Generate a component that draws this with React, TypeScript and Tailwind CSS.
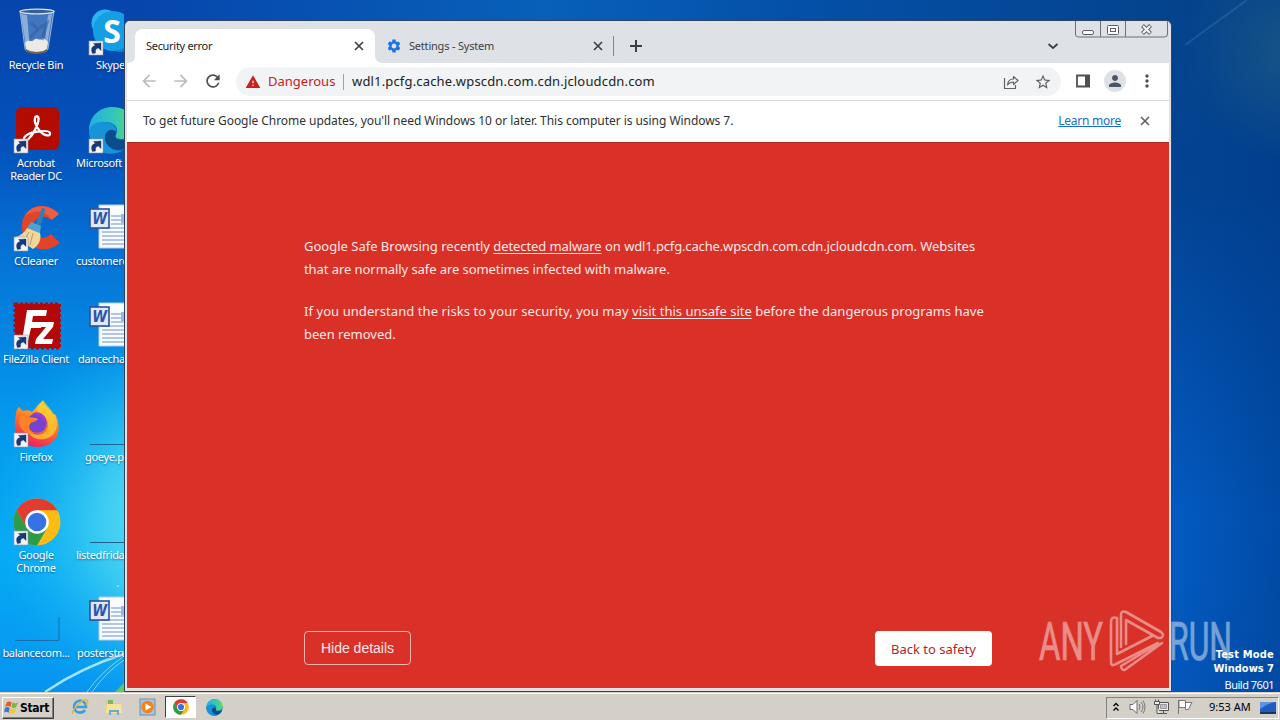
import type { ReactNode } from 'react'
import { clsx } from 'clsx'
import { MdArrowBack, MdArrowForward, MdRefresh, MdStarBorder, MdPerson, MdMoreVert, MdSettings, MdWarning } from 'react-icons/md'

function ShortcutArrow() {
  return (
    <g>
      <rect x="1" y="33" width="14" height="14" fill="#f4f4f4" stroke="#8b98a8" strokeWidth=".6" />
      <path d="M4.500 45.500C2.500 41 4 38 7.500 37.500L5.500 35.500 13 35v7.500L10.500 40C8 40.500 7 42 7.500 45z" fill="#17397c" stroke="#0c2a66" strokeWidth=".4" />
    </g>
  )
}

function Cross({ className }: { className?: string }) {
  return (
    <svg width="14" height="14" viewBox="0 0 14 14" className={clsx('shrink-0', className)}>
      <path d="M3 3l8 8M11 3l-8 8" fill="none" stroke="currentColor" strokeWidth="1.700" />
    </svg>
  )
}

function Art({ children, shortcut = true }: { children?: ReactNode; shortcut?: boolean }) {
  return (
    <svg width="48" height="48" viewBox="0 0 48 48" className="block shrink-0">
      {children}
      {shortcut && <ShortcutArrow />}
    </svg>
  )
}

function RecycleBin() {
  return (
    <Art shortcut={false}>
      <path d="M7 3l5 38c.4 5 22 5 23 0l6-38z" fill="#7fa6cf" fillOpacity=".5" stroke="#b4cbe3" strokeWidth=".8" />
      <path d="M8 6l5 33 4 2-3-34zM39 6l-5 33-3 2 4-34z" fill="#d8e6f4" fillOpacity=".5" />
      <path d="M12 35c3-5 6 0 9-3s5 1 7-1 5 1 7 3l-1 7c-4 4-17 4-21 0z" fill="#eceae4" />
      <path d="M18 15l7 6-8 9M25 21l9-6-5 17" fill="none" stroke="#315f9f" strokeWidth="3" strokeOpacity=".55" />
      <path d="M13 41c4 4 17 4 21 0v2c-4 4-17 4-21 0z" fill="#76644c" />
      <ellipse cx="24" cy="3.5" rx="17" ry="2.3" fill="#365f92" stroke="#d6e0ea" strokeWidth="1.3" />
    </Art>
  )
}

function Skype() {
  return (
    <Art>
      <circle cx="17" cy="15" r="13.500" fill="#2cb4ee" />
      <circle cx="32" cy="31" r="13" fill="#0c7fd0" />
      <circle cx="25" cy="23" r="20" fill="#149fe4" />
      <text x="24" y="35" textAnchor="middle" fontSize="32" fontWeight="700" fill="#fff" fontFamily="Open Sans, sans-serif">S</text>
    </Art>
  )
}

function Acrobat() {
  return (
    <Art>
      <rect x="3" y="1" width="43" height="43" rx="6" fill="#b30b00" />
      <path d="M11 34c-1-4 5-7 11-8 6-1 14-2 15 1 1 4-6 3-10-2-4-4-6-10-5-13 1-3 4-2 3.500 2C25 19 20 29 15.500 33c-2 2-4 3-4.500 1z" fill="none" stroke="#fff" strokeWidth="2.300" />
    </Art>
  )
}

const edgeShapes = (
  <g>
    <circle cx="24" cy="24" r="23" fill="#0c70bd" />
    <path d="M1 25C1 10 12 1 24 1c14 0 23 9 23 19 0 8-6 13-14 13-5 0-6-2-5-4 4-8-3-13-10-13C10 16 3 20 1 25z" fill="url(#edgeGreen)" />
    <path d="M1 25c2-7 9-10 16-9 7 0 12 5 11 10-4-5-12-1-11 7 1 8 9 12 17 12C18 53 1 43 1 25z" fill="#1794d8" />
    <path d="M17 33c-1-8 7-12 11-7-2 6 0 8 6 8s9-1 10 1c-3 5-8 9-14 9-7 0-12-5-13-11z" fill="#0b4c91" />
  </g>
)

function CCleaner() {
  return (
    <Art>
      <path d="M46 10C33-5 9 2 9 22s21 31 38 17l-9-9c-9 8-18 2-18-7s10-14 18-7z" fill="#e0452c" />
      <path d="M46 10C35-1 18 0 12 12c10-7 20-6 27 4z" fill="#f0694a" fillOpacity=".7" />
      <path d="M29 4l3.500 1-6 20-5-2z" fill="#2f7fb5" />
      <path d="M18 18l10 4-1 7-13-5z" fill="#4ca3d4" />
      <path d="M14 24l13 5c2 7-2 13-7 16L2 33c5-1 9-4 12-9z" fill="#f2d699" />
      <path d="M16 28l-5 9M20 29l-3 12" stroke="#c69c50" />
    </Art>
  )
}

function WordDoc() {
  return (
    <Art shortcut={false}>
      <path d="M11 1h34v43H11z" fill="#f8fbff" stroke="#b9c9e4" />
      <path d="M23 12h20M23 16h20M23 20h20M14 24h28M14 28h28M14 32h28M14 36h28M14 40h28" stroke="#6f8fce" />
      <rect x="33" y="10" width="12" height="9" fill="#9bb6e4" />
      <rect x="2" y="5" width="19" height="19" fill="#dfe8f8" stroke="#2c4f9e" strokeWidth="1.600" />
      <text x="11.500" y="20" textAnchor="middle" fontSize="15" fontWeight="700" fontStyle="italic" fill="#2d55ac" fontFamily="DejaVu Sans Condensed, sans-serif">W</text>
    </Art>
  )
}

function FileZilla() {
  return (
    <Art>
      <rect x="2" y="2" width="45" height="44" fill="#b40808" stroke="#b40808" strokeWidth="3" strokeDasharray="3 2" />
      <path d="M14 8h20l-1 6H20l-1 6h10l-1 6H18l-3 13H9z" fill="#fff" />
      <path d="M27 20h14l-1 5-10 12h10l-1 5H22l1-5 10-12h-7z" fill="#fff" />
    </Art>
  )
}

function Firefox() {
  return (
    <Art>
      <path d="M3 14c0-3 1-5 3-7l4 4c3-1 6-1 9 1 3-3 6-8 11-11 1 5 5 7 8 10l1 4 3-1c8 14 3 33-17 33C4 47-1 30 3 14z" fill="url(#foxBody)" />
      <path d="M30 0c-4 4-7 9-6 14 7 0 12 5 11 12-1 10-15 12-20 3 0 12 22 15 28 1 4-13-5-19-13-30z" fill="#ffce32" fillOpacity=".75" />
      <circle cx="24" cy="23" r="9.800" fill="#7542d4" />
      <path d="M6 17c4-2 7-1 10 0 3 1 6 0 9 2-2 3-7 3-8 5-2 4 0 7 4 9-8 3-16-4-15-16z" fill="#ff8226" />
      <path d="M19 14c7-5 16 2 14 11-2-6-5-9-14-11z" fill="#9b3bd5" />
    </Art>
  )
}

const chromeShapes = (
  <g>
    <circle cx="24" cy="24" r="23.500" fill="#fbbc16" />
    <path d="M3.600 12.300A23.500 23.500 0 0 1 44.400 12.300H24L13.800 29.900z" fill="#e03c30" />
    <path d="M3.600 12.300A23.500 23.500 0 0 0 24 47.500L34.200 29.900H13.800z" fill="#2d9b48" />
    <circle cx="24" cy="24" r="11.800" fill="#fff" />
    <circle cx="24" cy="24" r="9.300" fill="#3573e5" />
  </g>
)

function BlankLine() {
  return (
    <Art shortcut={false}>
      <path d="M2 44.500h44" stroke="#17648f" />
    </Art>
  )
}

function BlankCorner() {
  return (
    <Art shortcut={false}>
      <path d="M2 44.500h44V21" fill="none" stroke="#176fae" />
    </Art>
  )
}

const firstColumn = [
  { label: 'Recycle Bin', icon: <RecycleBin /> },
  { label: 'Acrobat\nReader DC', icon: <Acrobat /> },
  { label: 'CCleaner', icon: <CCleaner /> },
  { label: 'FileZilla Client', icon: <FileZilla /> },
  { label: 'Firefox', icon: <Firefox /> },
  { label: 'Google\nChrome', icon: <Art>{chromeShapes}</Art> },
  { label: 'balancecom...', icon: <BlankCorner /> },
]

const secondColumn = [
  { label: 'Skype', icon: <Skype />, indent: 'pl-[22px]' },
  { label: 'Microsoft', icon: <Art>{edgeShapes}</Art>, indent: 'pl-[2px]' },
  { label: 'customerc', icon: <WordDoc />, indent: 'pl-[2px]' },
  { label: 'dancecha', icon: <WordDoc />, indent: 'pl-[4px]' },
  { label: 'goeye.p', icon: <BlankLine />, indent: 'pl-[11px]' },
  { label: 'listedfrida', icon: <BlankLine />, indent: 'pl-[2px]' },
  { label: 'posterstru', icon: <WordDoc />, indent: 'pl-[3px]' },
]

function DesktopIcons() {
  return (
    <div className="flex pt-2 text-[11px] leading-[13px] tracking-[-0.32px] text-white">
      <div className="flex w-[74px] flex-col">
        {firstColumn.map((item) => (
          <div key={item.label} className="flex h-[98px] w-[74px] flex-col items-center">
            {item.icon}
            <div className="mt-[2px] w-[80px] whitespace-pre pr-[2px] text-center [text-shadow:0_1px_2px_rgba(0,20,60,.5)]">{item.label}</div>
          </div>
        ))}
      </div>
      <div className="flex w-[50px] flex-col overflow-hidden">
        {secondColumn.map((item) => (
          <div key={item.label} className="h-[98px] w-[74px]">
            <div className="pl-[14px]">{item.icon}</div>
            <div className={clsx('mt-[2px] whitespace-nowrap [text-shadow:0_1px_2px_rgba(0,20,60,.5)]', item.indent)}>{item.label}</div>
          </div>
        ))}
      </div>
    </div>
  )
}

function Wallpaper() {
  return (
    <svg width="1280" height="692" className="absolute left-0 top-0">
      <defs>
        <linearGradient id="sky" x1="0" y1="0" x2="0" y2="1">
          <stop offset="0" stopColor="#0645ac" />
          <stop offset=".2" stopColor="#0450ba" />
          <stop offset=".38" stopColor="#0575d8" />
          <stop offset=".6" stopColor="#0498ec" />
          <stop offset=".8" stopColor="#05aaf5" />
          <stop offset="1" stopColor="#0794f0" />
        </linearGradient>
        <radialGradient id="glow" gradientUnits="userSpaceOnUse" cx="190" cy="520" r="210">
          <stop offset="0" stopColor="#7ff0f5" />
          <stop offset=".45" stopColor="#48d5f2" stopOpacity=".75" />
          <stop offset="1" stopColor="#05aaf5" stopOpacity="0" />
        </radialGradient>
        <linearGradient id="topStrip">
          <stop offset="0" stopColor="#0645ac" />
          <stop offset=".4" stopColor="#0860b8" />
          <stop offset=".65" stopColor="#0450a8" />
          <stop offset="1" stopColor="#04438d" />
        </linearGradient>
        <linearGradient id="rightStrip" x1="0" y1="0" x2="0" y2="1">
          <stop offset="0" stopColor="#04438d" />
          <stop offset=".28" stopColor="#024493" />
          <stop offset=".5" stopColor="#024fac" />
          <stop offset=".75" stopColor="#025cc3" />
          <stop offset="1" stopColor="#0358bc" />
        </linearGradient>
        <linearGradient id="edgeShade">
          <stop offset="0" stopColor="#003a88" stopOpacity="0" />
          <stop offset="1" stopColor="#003a88" stopOpacity=".5" />
        </linearGradient>
        <radialGradient id="cornerHaze" gradientUnits="userSpaceOnUse" cx="1290" cy="50" r="110">
          <stop offset="0" stopColor="#1f5d85" stopOpacity=".7" />
          <stop offset="1" stopColor="#1f5d85" stopOpacity="0" />
        </radialGradient>
        <linearGradient id="edgeGreen">
          <stop offset="0" stopColor="#22aee4" />
          <stop offset=".6" stopColor="#37c9b3" />
          <stop offset="1" stopColor="#6ddb4d" />
        </linearGradient>
        <linearGradient id="foxBody" x1=".7" y1="0" x2=".3" y2="1">
          <stop offset="0" stopColor="#ffd72e" />
          <stop offset=".45" stopColor="#ff7a22" />
          <stop offset="1" stopColor="#ec1b67" />
        </linearGradient>
      </defs>
      <rect width="1280" height="692" fill="url(#sky)" />
      <rect width="400" height="692" fill="url(#glow)" />
      <rect x="124" width="1046" height="40" fill="url(#topStrip)" />
      <rect x="1168" width="112" height="692" fill="url(#rightStrip)" />
      <rect x="1168" width="112" height="692" fill="url(#edgeShade)" />
      <rect x="1168" width="112" height="200" fill="url(#cornerHaze)" />
      <path d="M1185 45L1247 0" stroke="#5f8fc0" strokeOpacity=".25" strokeWidth="2" />
      <path d="M45 692Q80 668 124 654" fill="none" stroke="#c9f8ff" strokeWidth="2.500" strokeOpacity=".8" />
      <path d="M87 692Q100 673 124 656M92 692Q106 672 124 660" fill="none" stroke="#a8efff" strokeOpacity=".7" />
      <path d="M115 692l9-9v9z" fill="#64c85a" />
      <path d="M117 586h2" stroke="#c2f2ff" />
    </svg>
  )
}

function CaptionButtons() {
  return (
    <svg width="93" height="17" viewBox="0 0 93 17" className="absolute right-px top-0" fill="none" stroke="#6d7178">
      <path d="M.5 0v13q0 3 3 3h86q3 0 3-3V0M25.500 0v16M50.500 0v16" />
      <rect x="7.500" y="9.500" width="11" height="4" rx="1.500" fill="#fff" stroke="#5a5f68" />
      <rect x="32.500" y="4.500" width="11" height="9" rx="1" fill="#fff" stroke="#5a5f68" />
      <rect x="35.500" y="7.500" width="5" height="3" stroke="#5a5f68" />
      <path d="M67.500 4.500l8 8M75.500 4.500l-8 8" stroke="#5a5f68" strokeWidth="4" />
      <path d="M68 5l7 7M75 5l-7 7" stroke="#f4f5f7" strokeWidth="2.200" />
    </svg>
  )
}

function TabStrip() {
  return (
    <div className="relative flex h-[42px] items-end bg-[#dee1e6] text-[11px] text-[#3c4043]">
      <svg width="8" height="8" viewBox="0 0 8 8" className="shrink-0">
        <path d="M8 0v8H0q8 0 8-8z" fill="#fff" />
      </svg>
      <div className="flex h-[34px] w-[240px] items-center justify-between rounded-t-lg bg-white pl-[11px] pr-[9px] text-[#202124]">
        <span className="tracking-[-0.3px]">Security error</span>
        <Cross className="text-[#3c4043]" />
      </div>
      <svg width="8" height="8" viewBox="0 0 8 8" className="shrink-0">
        <path d="M0 0v8h8q-8 0-8-8z" fill="#fff" />
      </svg>
      <div className="flex h-[34px] w-[230px] items-center pl-[3px] pr-[8px]">
        <MdSettings className="h-4 w-4 text-[#1a73e8]" />
        <span className="ml-[7px] flex-1 tracking-[-0.2px]">Settings - System</span>
        <Cross />
      </div>
      <div className="mb-[7px] h-[20px] w-px bg-[#80868b]" />
      <svg width="18" height="18" viewBox="0 0 18 18" className="mb-[8px] ml-[13px]">
        <path d="M9 3v12M3 9h12" stroke="#3c4043" strokeWidth="2" />
      </svg>
      <svg width="12" height="8" viewBox="0 0 12 8" className="mb-[13px] ml-[402px]">
        <path d="M1.500 2L6 6l4.500-4" fill="none" stroke="#3c4043" strokeWidth="1.800" />
      </svg>
      <CaptionButtons />
    </div>
  )
}

function Toolbar() {
  return (
    <div className="flex h-[38px] items-center border-b border-[#d5d7da] bg-white pb-px pl-[12px] text-[#5f6368]">
      <MdArrowBack className="h-5 w-5 text-[#babcbe]" />
      <MdArrowForward className="ml-3 h-5 w-5 text-[#babcbe]" />
      <MdRefresh className="ml-3 h-5 w-5 text-[#4a4d51]" />
      <div className="ml-[13px] mt-px flex h-[29px] w-[825px] items-center rounded-full bg-[#f1f3f4] pl-[9px] pr-[9px] text-[13px]">
        <MdWarning className="h-4 w-4 text-[#c5221f]" />
        <span className="ml-[7px] w-[68px] whitespace-nowrap pt-px text-[#c5221f]">Dangerous</span>
        <span className="ml-[7px] h-4 w-px bg-[#9aa0a6]" />
        <span className="ml-[8px] flex-1 pt-px tracking-[0.16px] text-[#202124]">wdl1.pcfg.cache.wpscdn.com.cdn.jcloudcdn.com</span>
        <svg width="16" height="16" viewBox="0 0 16 16" fill="none" stroke="currentColor" strokeWidth="1.200">
          <path d="M1.500 4v10.500h11V11M4.500 11c.3-4 2-6 6-6V2.500l4.500 4-4.500 4V8c-3 0-4.500.8-6 3z" strokeLinejoin="round" />
        </svg>
        <MdStarBorder className="ml-[15px] h-[18px] w-[18px]" />
      </div>
      <svg width="14" height="14" viewBox="0 0 14 14" className="ml-[15px]">
        <path d="M1 1.500h12v11H1z" fill="none" stroke="#4d5156" strokeWidth="1.800" />
        <path d="M9 1h5v12H9z" fill="#4d5156" />
      </svg>
      <div className="ml-[14px] flex h-[22px] w-[22px] items-center justify-center rounded-full bg-[#dee1e6]">
        <MdPerson className="h-[18px] w-[18px] text-[#4d5568]" />
      </div>
      <MdMoreVert className="ml-[11px] h-5 w-5 text-[#4d5156]" />
    </div>
  )
}

function BrowserWindow() {
  return (
    <div className="absolute left-[124px] top-[20px] flex h-[672px] w-[1048px] flex-col overflow-hidden rounded-t-[6px] border border-[#2c4662] bg-[#e6e1e3] px-[2px] pb-[3px]">
      <TabStrip />
      <Toolbar />
      <div className="flex h-[41px] items-center justify-between bg-white pb-[2px] pl-[16px] pr-[17px] text-[12px] text-[#303134]">
        <span className="tracking-[-0.05px]">To get future Google Chrome updates, you'll need Windows 10 or later. This computer is using Windows 7.</span>
        <span className="flex items-center">
          <a className="tracking-[-0.25px] text-[#1a6dcc] underline underline-offset-1">Learn more</a>
          <Cross className="ml-[17px] mt-px text-[#5f6368]" />
        </span>
      </div>
      <main className="flex flex-1 flex-col border-t border-[#a52a25] bg-[#d93027] pl-[177px] pr-[177px] text-[13px] text-[#fce8e6]">
        <p className="mt-[92px] whitespace-nowrap leading-[23px]">
          Google Safe Browsing recently <a className="tracking-[-0.1px] underline underline-offset-2">detected malware</a> on <span className="tracking-[-0.15px]">wdl1.pcfg.cache.wpscdn.com.cdn.jcloudcdn.com.</span> Websites
          <br />
          <span className="tracking-[-0.07px]">that are normally safe are sometimes infected with malware.</span>
        </p>
        <p className="mt-[19px] whitespace-nowrap leading-[23px]">
          <span className="tracking-[0.07px]">If you understand the risks to your security, you may </span>
          <a className="underline underline-offset-2">visit this unsafe site</a> before the dangerous programs have
          <br />
          been removed.
        </p>
        <div className="mt-auto flex items-start justify-between pb-[22px]">
          <button className="h-[34px] w-[107px] rounded border border-[#f3b5b1] font-['Liberation_Sans',sans-serif] text-[14px]">Hide details</button>
          <button className="h-[35px] w-[117px] rounded bg-white pt-[2px] text-[#b3261e]">Back to safety</button>
        </div>
      </main>
    </div>
  )
}

function Watermark() {
  return (
    <svg width="200" height="72" viewBox="1036 606 200 72" className="absolute left-[1036px] top-[606px] opacity-45">
      <g fill="#fff" stroke="#fff" strokeWidth=".7" fontFamily="Roboto, sans-serif" fontSize="53.500">
        <text x="1039" y="660" textLength="64" lengthAdjust="spacingAndGlyphs">ANY</text>
        <text x="1169" y="660" textLength="63" lengthAdjust="spacingAndGlyphs">RUN</text>
      </g>
      <g fill="none" stroke="#fff" strokeWidth="2.600" strokeLinejoin="round" strokeLinecap="round">
        <path d="M1117 623v-5q-6-2-6 4v40q0 5 5 2l42-21M1117 623v31l35-18" />
        <path d="M1121 647v-32q0-5 5-3l35 20q4 3 0 6l-3 0-32-18v24" />
        <path d="M1162 643l-36 26q-4 3-5-3l35-21" />
      </g>
    </svg>
  )
}

function Taskbar() {
  return (
    <div className="absolute left-0 top-[692px] flex h-[28px] w-[1280px] items-center border-t border-[#d4d0c8] bg-[#d4d0c8] pl-[2px] pr-px text-black shadow-[inset_0_1px_0_#fff]">
      <button className="mt-[2px] flex h-[22px] w-[52px] items-center whitespace-nowrap border border-b-[#404040] border-l-white border-r-[#404040] border-t-white pl-px shadow-[inset_-1px_-1px_0_#808080]">
        <svg width="15" height="15" viewBox="0 0 16 15" className="shrink-0">
          <path d="M3 2q3-2 5 0L7 7Q4 5 1 7z" fill="#e8582c" />
          <path d="M9 2q3 2 6 0l-2 5q-3 2-5 0z" fill="#78b843" />
          <path d="M1 8q3-2 5 0l-1 5q-3-2-5 0z" fill="#3976d0" />
          <path d="M7 8q3 2 6 0l-2 5q-3 2-5 0z" fill="#f5c530" />
        </svg>
        <span className="ml-px font-['DejaVu_Sans_Condensed','DejaVu_Sans',sans-serif] text-[12px] font-bold tracking-[-0.3px]">Start</span>
      </button>
      <div className="ml-[17px] mt-px flex items-center">
        <svg width="18" height="18" viewBox="0 0 18 18" fill="none">
          <path d="M14 12A6 6 0 1 1 15 9H5" stroke="#3aa0dc" strokeWidth="2.600" />
          <path d="M2 16C-1 13 12 0 16 2q2 1-1 5" stroke="#e4b63e" strokeWidth="1.400" />
        </svg>
        <svg width="18" height="18" viewBox="0 0 18 18" className="ml-[16px]">
          <path d="M1 3h6l2 2h7v11H1z" fill="#eccb68" />
          <path d="M3 2h5v4H3z" fill="#78b866" />
          <path d="M2 6h14l1 9H1z" fill="#f7e49c" />
          <path d="M4 17v-5h10v5h-2v-3H6v3z" fill="#67abdc" />
        </svg>
        <svg width="18" height="18" viewBox="0 0 18 18" className="ml-[16px]">
          <rect x="1" y="1" width="15" height="16" fill="#a7c5e3" stroke="#6c8fb4" />
          <circle cx="8.500" cy="9" r="6.200" fill="#f58216" />
          <path d="M6.500 5.500v7l6-3.500z" fill="#fff" />
        </svg>
        <div className="ml-[8px] flex h-[22px] w-[31px] items-center justify-center border border-b-white border-l-[#404040] border-r-white border-t-[#404040] bg-white">
          <svg width="16" height="16" viewBox="0 0 48 48">{chromeShapes}</svg>
        </div>
        <svg width="17" height="17" viewBox="0 0 48 48" className="ml-[10px]">{edgeShapes}</svg>
      </div>
      <div className="ml-auto mt-[2px] flex h-[22px] w-[173px] items-center border border-b-white border-l-[#808080] border-r-white border-t-[#808080] pb-px pl-[5px]">
        <svg width="8" height="10" viewBox="0 0 8 10" fill="none" stroke="#000" strokeWidth="1.300">
          <path d="M1.500 4L4 1.500 6.500 4M1.500 8.500L4 6l2.500 2.500" />
        </svg>
        <svg width="17" height="16" viewBox="0 0 17 16" className="ml-[9px]" fill="#fff" stroke="#6a6a6a">
          <path d="M1 5.500h3l4-4v13l-4-4H1z" />
          <path d="M10 5q2 3 0 6M12 3q4 5 0 10M14 1.500q4 6.500 0 13" fill="none" strokeWidth=".9" />
        </svg>
        <svg width="17" height="16" viewBox="0 0 17 16" className="ml-[7px]" fill="#eee" stroke="#555">
          <path d="M5.500 3.500h10v8h-10zM7 14.500h7M10.500 12v2" />
          <path d="M7.500 5.500h6v4h-6z" fill="#c0c0c0" stroke="#999" />
          <path d="M1.500 2.500h5v3h-5zM2.500.5v2M5.500.5v2M4 6v8.500h3" />
        </svg>
        <svg width="17" height="16" viewBox="0 0 17 16" className="ml-[7px]" fill="#fff" stroke="#777">
          <path d="M1.500 1v14M2 1.500h6.500v7H2zM8.500 3.500h6.500l-2 3.500-1.500 3.500H8.500z" />
        </svg>
        <span className="ml-[15px] whitespace-nowrap text-[11px]">9:53 AM</span>
        <svg width="16" height="14" viewBox="0 0 16 14" className="ml-auto mr-[2px] mt-px">
          <path d="M0 1h16v10H0z" fill="#1f5dc0" />
          <path d="M0 1h16Q8 2 0 8z" fill="#5b95e4" />
          <path d="M0 11h16v2H0z" fill="#21344f" />
        </svg>
      </div>
    </div>
  )
}

export default function App() {
  return (
    <div className="relative h-[720px] w-[1280px] overflow-hidden font-['Noto_Sans',sans-serif]">
      <Wallpaper />
      <div className="relative">
        <DesktopIcons />
      </div>
      <BrowserWindow />
      <Watermark />
      <div className="absolute right-[6px] top-[648px] text-right text-[11px] leading-[14px] text-white">
        <div className="font-['DejaVu_Sans_Condensed','DejaVu_Sans',sans-serif] font-bold tracking-[0.2px]">Test Mode</div>
        <div className="font-['DejaVu_Sans_Condensed','DejaVu_Sans',sans-serif] font-bold">Windows 7</div>
        <div className="leading-[18px] tracking-[-0.5px]">Build 7601</div>
      </div>
      <Taskbar />
    </div>
  )
}
